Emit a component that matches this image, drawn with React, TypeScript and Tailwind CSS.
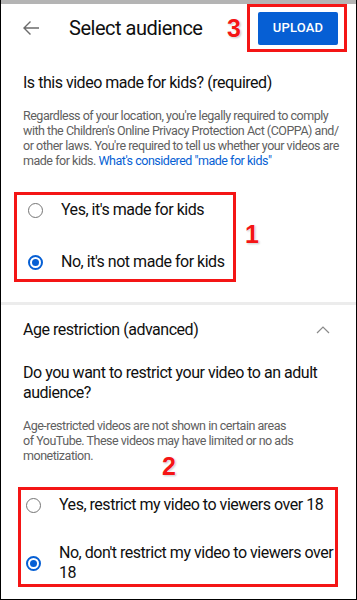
import React from 'react';

const Radio = ({ checked }: { checked: boolean }) =>
  checked ? (
    <span className="flex h-[15px] w-[15px] shrink-0 items-center justify-center rounded-full border-2 border-[#065fd4]">
      <span className="h-[7px] w-[7px] rounded-full bg-[#065fd4]" />
    </span>
  ) : (
    <span className="h-[15px] w-[15px] shrink-0 rounded-full border-[1.5px] border-[#757575]" />
  );

const Marker = ({ n, className }: { n: string; className?: string }) => (
  <span
    className={
      'font-bold text-[25px] leading-none tracking-normal text-[#f41515] [font-family:"Liberation_Sans",Arial,sans-serif] [text-shadow:0_0_1px_#fff,0_0_2px_#fff,1px_1px_2px_#bbb] ' +
      (className || '')
    }
  >
    {n}
  </span>
);

export default function App() {
  return (
    <div
      className="relative h-[600px] w-[357px] overflow-hidden border-x border-b border-black bg-white tracking-[-0.03em] text-[#0f0f0f]"
      style={{ fontFamily: 'Roboto, "Liberation Sans", sans-serif' }}
    >
      <div className="h-[4px] bg-[#b4b4b4]" />

      {/* header */}
      <div className="flex h-[48px] items-center">
        <svg className="ml-[21px] h-[16px] w-[18px]" viewBox="0 0 18 16" fill="none" stroke="#6b6b6b" strokeWidth="1.4">
          <path d="M17 8H2M8.5 1.5L2 8l6.5 6.5" />
        </svg>
        <h1 className="ml-[29px] text-[20px] leading-none">Select audience</h1>
        <Marker n="3" className="ml-auto mr-[6px]" />
        <div className="mr-[9px] flex h-[48px] w-[100px] items-center border-[3px] border-[#f41515] pl-[8px]">
          <button className="h-[33px] w-[80px] rounded-[2px] bg-[#065fd4] text-[13px] font-medium tracking-[0.2px] text-white">
            UPLOAD
          </button>
        </div>
      </div>

      <div className="px-[22px]">
        <h2 className="mt-[20px] text-[16px] leading-[22px]">Is this video made for kids? (required)</h2>
        <p className="mt-[14px] whitespace-nowrap text-[12.5px] leading-[15px] text-[#606060]">
          Regardless of your location, you're legally required to comply
          <br />
          with the Children's Online Privacy Protection Act (COPPA) and/
          <br />
          or other laws. You're required to tell us whether your videos are
          <br />
          made for kids. <span className="text-[#065fd4]">What's considered "made for kids"</span>
        </p>
      </div>

      <div className="ml-[13px] mt-[24px] flex items-center gap-[9px]">
        <div className="flex w-[222px] flex-col gap-[22px] border-[3px] border-[#f41515] pb-[2px] pl-[11px] text-[16px]">
          <label className="flex h-[30px] items-center gap-[18px]">
            <Radio checked={false} />
            Yes, it's made for kids
          </label>
          <label className="flex h-[30px] items-center gap-[18px]">
            <Radio checked />
            No, it's not made for kids
          </label>
        </div>
        <Marker n="1" className="mt-[-6px]" />
      </div>

      <div className="mt-[20px] h-[3px] bg-[#ececec]" />

      <div className="px-[22px]">
        <div className="mt-[14px] flex items-center justify-between">
          <h2 className="text-[16px] leading-[22px]">Age restriction (advanced)</h2>
          <svg className="mr-[4px] h-[8px] w-[14px]" viewBox="0 0 14 8" fill="none" stroke="#8a8a8a" strokeWidth="1.2">
            <path d="M1 7l6-6 6 6" />
          </svg>
        </div>
        <h3 className="mt-[22px] text-[16px] leading-[20px]">
          Do you want to restrict your video to an adult
          <br />
          audience?
        </h3>
        <p className="mt-[15px] whitespace-nowrap text-[12.5px] leading-[15px] text-[#606060]">
          Age-restricted videos are not shown in certain areas
          <br />
          of YouTube. These videos may have limited or no ads
          <br />
          monetization.
        </p>
      </div>

      <Marker n="2" className="absolute left-[161px] top-[454px]" />

      <div className="ml-[17px] mt-[24px] flex w-[320px] flex-col gap-[23px] border-[3px] border-[#f41515] pb-[1px] pl-[5px] text-[16px]">
        <label className="flex h-[30px] items-center gap-[18px]">
          <Radio checked={false} />
          Yes, restrict my video to viewers over 18
        </label>
        <label className="flex h-[40px] items-center gap-[18px] leading-[20px]">
          <Radio checked />
          <span className="w-[275px]">
            No, don't restrict my video to viewers over
            <br />
            18
          </span>
        </label>
      </div>
    </div>
  );
}
